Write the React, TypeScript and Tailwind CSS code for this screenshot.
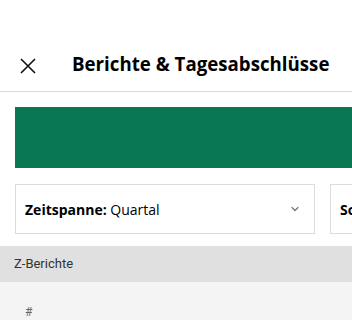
import { ChevronDown } from "lucide-react";

export default function App() {
  return (
    <div className="h-[320px] w-[352px] overflow-hidden bg-white font-['Open_Sans',sans-serif] text-black">
      <header className="flex h-[92px] items-end border-b border-[#d9d9d9] pb-[15px]">
        <button className="ml-[18px] flex h-5 w-5 items-center justify-center">
          <svg width="18" height="18" viewBox="0 0 18 18" fill="none" stroke="#111" strokeWidth="1.6">
            <path d="M2 2 L16 16 M16 2 L2 16" />
          </svg>
        </button>
        <h1 className="ml-[34px] text-[18.7px] font-bold leading-6 whitespace-nowrap">Berichte &amp; Tagesabschlüsse</h1>
      </header>

      <div className="ml-[15px] mt-[15px] h-[61px] bg-[#0a7754]" />

      <div className="ml-[15px] mt-[16px] flex gap-[15px]">
        <div className="flex h-[50px] w-[300px] shrink-0 items-center justify-between border border-[#dcdcdc] pl-[9px] pr-[13px] text-[14px]">
          <span>
            <span className="font-bold">Zeitspanne:</span> Quartal
          </span>
          <ChevronDown size={12} strokeWidth={2.5} className="text-[#777]" />
        </div>
        <div className="flex h-[50px] w-[200px] shrink-0 items-center border border-[#dcdcdc] pl-[9px] text-[14px]">
          <span className="font-bold">Sortierung:</span>
        </div>
      </div>

      <div className="mt-[12px] flex h-[36px] items-center bg-[#e0e0e0] pl-[14px] font-['Roboto',sans-serif] text-[13px] text-[#333]">
        Z-Berichte
      </div>
      <div className="h-[60px] bg-[#f4f4f4] pl-[25px] pt-[21px] font-['Roboto',sans-serif] text-[12px] text-[#666]">
        #
      </div>
    </div>
  );
}
